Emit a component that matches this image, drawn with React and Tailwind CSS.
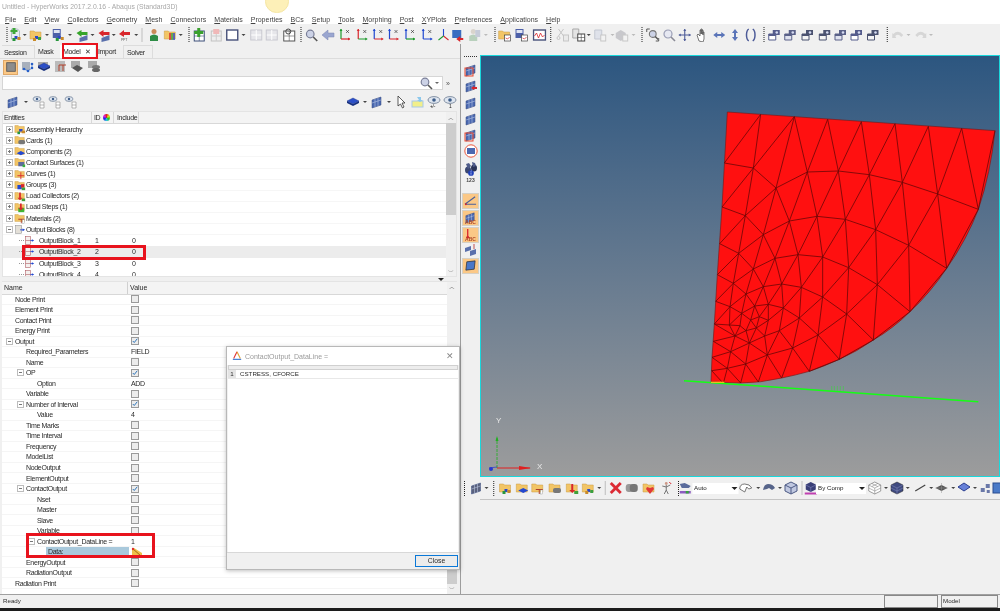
import React from "react";

const MENU = ["File","Edit","View","Collectors","Geometry","Mesh","Connectors","Materials","Properties","BCs","Setup","Tools","Morphing","Post","XYPlots","Preferences","Applications","Help"];

const Folder = ({ children }) => (
  <>
    <path d="M1 3h4l1 1h6v7H1z" fill="#f2c566" stroke="#c99a45" strokeWidth=".5" />
    {children}
  </>
);
const Mesh = ({ c = "#4a68b0" }) => (
  <>
    <path d="M2 5l9-3v8l-9 3z" fill={c} stroke="#34487f" strokeWidth=".5" />
    <path d="M5 4v8M8 3v8M2 8l9-3" stroke="#c8d4ee" strokeWidth=".5" />
  </>
);
const Axis = ({ a = "#1d9a2c", b = "#d8262c" }) => (
  <>
    <path d="M3 1v10" stroke={a} strokeWidth="1.2" />
    <path d="M3 11h9" stroke={b} strokeWidth="1.2" />
    <path d="M1.5 3L3 1l1.5 2z" fill={a} />
    <path d="M10 9.5l2 1.5-2 1.5z" fill={b} />
    <path d="M8 2l3 3M11 2L8 5" stroke="#222" strokeWidth=".6" />
  </>
);
const Cam = ({ c = "#555c8c", f = "#fff" }) => (
  <>
    <path d="M5 2h7v5H5z" fill={c} />
    <circle cx="9" cy="4.5" r="1.3" fill="#d6dcf2" />
    <path d="M1 6h7v6H1z" fill={f} stroke={c} strokeWidth="1" />
    <path d="M1 6h7v2H1z" fill={c} />
  </>
);
const Diamond = ({ c = "#2b4fc8" }) => (
  <>
    <path d="M7 3l6 3-6 3-6-3z" fill={c} stroke="#1a2f80" strokeWidth=".4" />
    <path d="M1 6v2l6 3 6-3V6l-6 3z" fill="#17307f" />
  </>
);

const ICONS = {
  fBlock: <Folder><rect x="6" y="8" width="3" height="3" fill="#2c49c8" /><rect x="9" y="9" width="3" height="3" fill="#c98a28" /><rect x="4" y="10" width="3" height="3" fill="#28963c" /></Folder>,
  docBlock: <><path d="M3 1h6l2 2v8H3z" fill="#e8eef2" stroke="#8a9aa8" strokeWidth=".6" /><path d="M4 0h3v2h2v2H7v2H4V4H2V2h2z" fill="#3fa83a" /><rect x="6" y="8" width="3" height="3" fill="#2c49c8" /><rect x="9" y="9" width="3" height="3" fill="#c98a28" /><rect x="4" y="10" width="3" height="3" fill="#28963c" /></>,
  fOpen: <Folder><rect x="6" y="8" width="3" height="3" fill="#2c49c8" /><rect x="9" y="9" width="3" height="3" fill="#38a040" /><rect x="4" y="10" width="3" height="3" fill="#c98a28" /></Folder>,
  save: <><path d="M2 1h8v9H2z" fill="#4c5fa8" /><path d="M3 2h6v3H3z" fill="#dfe4f2" /><rect x="7" y="8" width="3" height="3" fill="#2c49c8" /><rect x="10" y="9" width="3" height="3" fill="#c98a28" /><rect x="5" y="10" width="3" height="3" fill="#28963c" /></>,
  gArrow: <><path d="M4 10l8-3v5l-8 2z" fill="#5a70ac" /><path d="M1 5l5-3v2h6v3H6v2z" fill="#36a52a" /></>,
  rArrow: <><path d="M4 10l8-3v5l-8 2z" fill="#5a70ac" /><path d="M1 5l5-3v2h6v3H6v2z" fill="#d8262c" /></>,
  ppt: <><path d="M1 6l5-4v2h6v3H6v2z" fill="#d8262c" /><text x="3" y="13" fontSize="3.6" fill="#555">PPT</text></>,
  user: <><circle cx="7" cy="3.5" r="2.5" fill="#c98a58" /><path d="M3 13V8q4-3 8 0v5z" fill="#2e8c46" /></>,
  fColor: <Folder><rect x="6" y="5" width="1.5" height="7" fill="#d8262c" /><rect x="8" y="5" width="1.5" height="7" fill="#38a040" /><rect x="10" y="5" width="1.5" height="7" fill="#2c49c8" /></Folder>,
  plus: <><rect x="2" y="3" width="10" height="10" fill="#fff" stroke="#3d4f78" /><path d="M2 8h10M7 3v10" stroke="#3d4f78" strokeWidth=".6" /><path d="M5 0h3v3h3v3H8v3H5V6H2V3h3z" fill="#3aa02e" /></>,
  del: <><rect x="2" y="3" width="10" height="10" fill="#eee" stroke="#c2c2c2" /><path d="M7 3v10M2 8h10" stroke="#ccc" /><path d="M4 1h6v5H4z" fill="#f0b8b8" /></>,
  square: <rect x="1.5" y="2" width="11" height="10" fill="#fff" stroke="#47517a" strokeWidth="1.4" />,
  gridD: <><rect x="1.5" y="2" width="11" height="10" fill="#e6e6ea" stroke="#c8c8d0" /><path d="M7 2v10M2 7h10" stroke="#fff" /></>,
  gridK: <><rect x="1.5" y="3" width="11" height="10" fill="#fff" stroke="#555" /><path d="M7 3v10M2 8h10" stroke="#555" strokeWidth=".6" /><circle cx="6" cy="3.5" r="2.5" fill="none" stroke="#444" /></>,
  mag: <><circle cx="6" cy="6" r="3.8" fill="#ccd2e6" stroke="#7a7f98" strokeWidth="1.2" /><path d="M9 9l4 4" stroke="#555" strokeWidth="1.6" /></>,
  back: <path d="M1 7l6-5v3h6v4H7v3z" fill="#9aa6d0" stroke="#7984b0" strokeWidth=".5" />,
  ax1: <Axis />,
  ax2: <Axis a="#d8262c" b="#1d9a2c" />,
  ax3: <Axis a="#2048d0" b="#d8262c" />,
  ax4: <Axis a="#2048d0" b="#1d9a2c" />,
  ax5: <Axis a="#2048d0" b="#2048d0" />,
  ax6: <><path d="M7 1v7" stroke="#2048d0" strokeWidth="1.1" /><path d="M7 8l5 4" stroke="#d8262c" strokeWidth="1.1" /><path d="M7 8l-5 4" stroke="#1d9a2c" strokeWidth="1.1" /></>,
  blueR: <><path d="M2 2h9v8H2z" fill="#3a6cc0" /><path d="M6 11l4-3v2h3v2h-3v2z" fill="#d8262c" /></>,
  userD: <><circle cx="6" cy="3.5" r="2.5" fill="#d9d4cc" /><path d="M2 13V8q4-3 8 0v5z" fill="#b8d0bc" /><rect x="8" y="2" width="5" height="7" fill="#c6cbd8" /></>,
  fPic: <Folder><rect x="7" y="7" width="6" height="6" fill="#fff" stroke="#444" strokeWidth=".7" /><path d="M8 10l2 1 2-2" stroke="#d8262c" strokeWidth=".7" fill="none" /></Folder>,
  saveP: <><path d="M1 1h8v9H1z" fill="#4c5fa8" /><path d="M2 2h6v3H2z" fill="#dfe4f2" /><rect x="7" y="7" width="6" height="6" fill="#fff" stroke="#444" strokeWidth=".7" /><path d="M8 10l2 1 2-2" stroke="#d8262c" strokeWidth=".7" fill="none" /></>,
  wave: <><rect x="1" y="2" width="12" height="10" fill="#fff" stroke="#47517a" strokeWidth="1.4" /><path d="M2 8l2-3 2 5 2-5 2 4 2-2" stroke="#d8262c" strokeWidth=".8" fill="none" /></>,
  cutD: <><path d="M3 1l5 7M8 1L3 8" stroke="#c6c6c6" /><circle cx="3" cy="10" r="1.5" fill="none" stroke="#c6c6c6" /><rect x="8" y="7" width="5" height="6" fill="#eaeaea" stroke="#c6c6c6" /></>,
  copy: <><path d="M1 1h6v9H1z" fill="#e4e4e4" stroke="#a8a8a8" /><rect x="6" y="6" width="7" height="7" fill="#fff" stroke="#444" /><path d="M9.5 6v7M6 9.5h7" stroke="#444" strokeWidth=".6" /></>,
  pasteD: <><path d="M2 2h7v9H2z" fill="#dfe2ea" stroke="#c4c8d2" /><rect x="8" y="7" width="5" height="6" fill="#f2f2f2" stroke="#c6c6c6" /></>,
  blockD: <><path d="M1 5l5-3 5 3v5l-5 3-5-3z" fill="#c8c8cc" /><rect x="8" y="7" width="5" height="6" fill="#f2f2f2" stroke="#c6c6c6" /></>,
  zoomBox: <><path d="M1 4V1h3M10 13h3v-3" stroke="#333" strokeWidth=".8" fill="none" /><circle cx="7" cy="6" r="3.4" fill="#ccd2e6" stroke="#777" strokeWidth="1.1" /><path d="M9.5 8.5l3 3" stroke="#555" strokeWidth="1.5" /></>,
  zoomP: <><circle cx="6" cy="6" r="4" fill="#e6e8f2" stroke="#9a9eb5" strokeWidth="1.2" /><path d="M9 9l4 4" stroke="#8a8a96" strokeWidth="1.6" /></>,
  move: <><path d="M7 1v12M1 7h12" stroke="#4d5b98" strokeWidth="1.1" /><path d="M5.5 3L7 1l1.5 2zM5.5 11L7 13l1.5-2zM3 5.5L1 7l2 1.5zM11 5.5L13 7l-2 1.5z" fill="#4d5b98" /></>,
  hand: <path d="M4 13L2 7l1-1 2 2V2h1v4-5h1v5-4h1v5-3h1v7l-1 3z" fill="#fff" stroke="#444" strokeWidth=".7" />,
  lr: <path d="M1 7l4-3v2h4V4l4 3-4 3V8H5v2z" fill="#5a74b8" />,
  ud: <path d="M7 1l3 4H8v4h2l-3 4-3-4h2V5H4z" fill="#5a74b8" />,
  braces: <path d="M5 1C2 3 2 11 5 13M9 1c3 2 3 10 0 12" fill="none" stroke="#4d5b98" strokeWidth="1.5" />,
  cam1: <Cam />,
  cam2: <Cam c="#5a6188" f="#dfe2ee" />,
  cam3: <Cam c="#4b5270" f="#f4f4f4" />,
  undo: <path d="M2 6q5-5 10 1l-2 2q-3-4-6-1l1 2H1V5z" fill="#d6d6d6" />,
  redo: <path d="M12 6Q7 1 2 7l2 2q3-4 6-1L9 10h4V5z" fill="#d6d6d6" />,
  mesh: <Mesh />,
  meshD: <Mesh c="#5b627e" />,
  fComp: <Folder><path d="M8 7l5 2.5-5 2.5-5-2.5z" fill="#2448d0" /></Folder>,
  fMat: <Folder><path d="M5 8h7v1H9v4H8V9H5z" fill="#b0402c" /><rect x="10" y="9" width="2" height="4" fill="#fff" stroke="#888" strokeWidth=".4" /></Folder>,
  fCard: <Folder><rect x="5" y="7" width="8" height="5" rx="2" fill="#777" /></Folder>,
  fLoad: <Folder><path d="M6 3h2v6h2l-3 3-3-3h2z" fill="#d8262c" /><rect x="9" y="10" width="4" height="3" fill="#3fa03a" /></Folder>,
  fStep: <Folder><rect x="5" y="8" width="7" height="5" fill="#3fb530" /><path d="M7 3h2v5h2l-3 3-3-3h2z" fill="#d8262c" /></Folder>,
  fSurf: <Folder><rect x="5" y="7" width="7" height="5" fill="#5f6b9c" /><rect x="10" y="10" width="3" height="3" fill="#38b040" /></Folder>,
  fCurve: <Folder><path d="M8 5v8M4 9h8" stroke="#d8262c" /></Folder>,
  fGroup: <Folder><rect x="4" y="7" width="5" height="5" fill="#2448d0" /><rect x="8" y="6" width="4" height="4" fill="#d8262c" /><rect x="9" y="10" width="4" height="3" fill="#38a040" /></Folder>,
  fOut: <><rect x="2" y="3" width="7" height="9" fill="#e4e0d8" stroke="#888" strokeWidth=".6" /><path d="M7 8h4" stroke="#2448d0" /><path d="M10 6.5L13 8l-3 1.5z" fill="#2448d0" /></>,
  fAsm: <Folder><rect x="6" y="7" width="4" height="3" fill="#2c49c8" /><rect x="9" y="9" width="4" height="3" fill="#c98a28" /><rect x="4" y="10" width="3" height="3" fill="#28963c" /></Folder>,
  out: <><rect x="2" y="2" width="6" height="10" fill="#f4f0ee" stroke="#a85058" strokeWidth=".7" /><path d="M2 7h6" stroke="#a85058" strokeWidth=".7" /><path d="M8 7h3" stroke="#2448d0" /><path d="M10 5.5L13 7l-3 1.5z" fill="#2448d0" /></>,
  panel: <rect x="2" y="2" width="10" height="10" fill="#8d8d8d" stroke="#555" />,
  tree: <><rect x="1" y="2" width="8" height="8" fill="#a8b0bc" /><circle cx="11" cy="4" r="1.3" fill="#2860c8" /><circle cx="11" cy="8" r="1.3" fill="#2860c8" /><circle cx="7" cy="11" r="1.3" fill="#2860c8" /><circle cx="3" cy="9" r="1.3" fill="#2860c8" /><path d="M3 9l4 2 4-3-0-4" stroke="#2860c8" strokeWidth=".6" fill="none" /></>,
  comp: <><path d="M1 2h10v5H1z" fill="#a8a8a8" /><Diamond /></>,
  mat: <><rect x="1" y="1" width="10" height="11" fill="#bbb" /><path d="M5 11V5h7M9 5v6" stroke="#b0402c" fill="none" /></>,
  card: <><rect x="1" y="1" width="9" height="7" fill="#aaa" /><path d="M2 8l5-3 6 3-5 4z" fill="#555" /></>,
  stack: <><rect x="1" y="1" width="9" height="7" fill="#aaa" /><ellipse cx="9" cy="7" rx="4" ry="2" fill="#777" /><ellipse cx="9" cy="10" rx="4" ry="2" fill="#666" /></>,
  eyeTree: <><ellipse cx="5" cy="4" rx="4" ry="2.4" fill="#dfe6f0" stroke="#6a7a90" strokeWidth=".7" /><circle cx="5" cy="4" r="1.2" fill="#3c5c88" /><path d="M8 7h4v6H8zM8 10h4" stroke="#8a8a8a" strokeWidth=".6" fill="#fff" /></>,
  eye: <><ellipse cx="7" cy="5" rx="6" ry="3.4" fill="#dfe6f0" stroke="#6a7a90" strokeWidth=".8" /><circle cx="7" cy="5" r="1.8" fill="#3c5c88" /><text x="3" y="13" fontSize="5" fill="#222">+/-</text></>,
  eye1: <><ellipse cx="7" cy="5" rx="6" ry="3.4" fill="#dfe6f0" stroke="#6a7a90" strokeWidth=".8" /><circle cx="7" cy="5" r="1.8" fill="#3c5c88" /><text x="6" y="13" fontSize="5" fill="#222">1</text></>,
  diamond: <Diamond />,
  cursor: <path d="M3 1l7 7H7l2 4-1.5 1-2-4L3 11z" fill="#fff" stroke="#333" strokeWidth=".8" />,
  yellow: <><rect x="1" y="6" width="11" height="6" fill="#f2ef8a" stroke="#a8c8e8" /><path d="M6 2h4v3h2l-3 2-3-2h2z" fill="#8cc8ec" /></>,
  xRed: <path d="M1 3l2-2 4 4 4-4 2 2-4 4 4 4-2 2-4-4-4 4-2-2 4-4z" fill="#dc2a34" />,
  parts: <><rect x="1" y="3" width="7" height="8" rx="3" fill="#999" /><rect x="5" y="3" width="8" height="8" rx="3" fill="#777" /></>,
  fHeart: <Folder><path d="M8 7l3-1 1 2-4 5-4-5 1-2z" fill="#e03838" /></Folder>,
  person: <><circle cx="7" cy="2.5" r="1.4" fill="#c98" /><path d="M7 4v5M5 13l2-4 2 4M3 5l4 1 4-2" stroke="#777" fill="none" /><path d="M10 1l2 2" stroke="#d8262c" /></>,
  comboA: <><path d="M1 3l5-1 6 3-2 2H3z" fill="#5a6c9c" /><rect x="1" y="10" width="11" height="2.5" fill="#8c5cc0" /><rect x="7" y="10" width="3" height="2.5" fill="#38a040" /></>,
  cut: <path d="M1 8q0-5 5-5 5 0 7 4l-3 1-2-2-2 5z" fill="#fff" stroke="#555" strokeWidth=".8" />,
  solid: <path d="M1 9q1-6 5-6 5 0 7 4l-3 2-3-2-2 1z" fill="#56648a" />,
  cube: <><path d="M7 1l6 3v6l-6 3-6-3V4z" fill="#c0c8e0" stroke="#4c5a84" /><path d="M1 4l6 3 6-3M7 7v6" stroke="#4c5a84" fill="none" /></>,
  cubeC: <><path d="M7 1l5 2.5v5l-5 2.5-5-2.5v-5z" fill="#3a3f78" /><path d="M2 4l5 2.5 5-2.5M7 6.5V11" stroke="#8d92c8" fill="none" strokeWidth=".5" /><rect x="1" y="11.5" width="12" height="2" fill="#c040b0" /></>,
  wire: <><path d="M7 1l6 3v6l-6 3-6-3V4z" fill="#fff" stroke="#777" strokeWidth=".7" /><path d="M1 4l6 3 6-3M7 7v6M4 2.5l6 3M10 2.5l-6 3M1 7l6 3 6-3" stroke="#777" fill="none" strokeWidth=".5" /></>,
  cubeD: <><path d="M7 1l6 3v6l-6 3-6-3V4z" fill="#3f4a80" stroke="#222" strokeWidth=".5" /><path d="M1 4l6 3 6-3M7 7v6M1 7l6 3 6-3" stroke="#8890c0" fill="none" strokeWidth=".5" /></>,
  line: <path d="M2 10l10-6" stroke="#444" strokeWidth="1.2" />,
  plane: <><path d="M7 4l6 3-6 3-6-3z" fill="#555" /><path d="M7 2v10M1 7h12" stroke="#999" strokeWidth=".5" /></>,
  plane2: <path d="M7 2l6 4-6 4-6-4z" fill="#6680d8" stroke="#2a3d90" />,
  pieces: <><rect x="2" y="7" width="4" height="4" fill="#6a78a8" /><rect x="7" y="3" width="4" height="4" fill="#6a78a8" /><rect x="8" y="9" width="3" height="3" fill="#6a78a8" /></>,
  blue: <rect x="2" y="2" width="10" height="10" fill="#4a7ac8" stroke="#2a4d90" />,
  vFrame: <><Mesh /><rect x="1" y="5" width="8" height="8" fill="none" stroke="#e8452c" /></>,
  vArrow: <><Mesh /><path d="M7 9l3-2v1h3v2h-3v1z" fill="#d8262c" /></>,
  vCircle: <><circle cx="7" cy="7" r="6.2" fill="#fff" stroke="#e8563c" /><path d="M3 4h8v6H3z" fill="#4a68b0" /></>,
  bino: <><ellipse cx="4" cy="9" rx="3" ry="3.5" fill="#3a4670" /><ellipse cx="10" cy="7" rx="3" ry="3.5" fill="#2a3356" /><path d="M2 3l3-1 2 3-3 3zM8 1l3 1 1 3-3 1z" fill="#4f5c8a" /></>,
  info: <><circle cx="7" cy="7" r="5" fill="#2040b8" /><path d="M7 3.5v1.500M7 6v4" stroke="#fff" /></>,
  vAngle: <><path d="M1 11L12 3M1 11h12" stroke="#4a5f9a" strokeWidth="1.2" fill="none" /><circle cx="2" cy="11" r="1" fill="#d8262c" /></>,
  vAbc: <Mesh />,
  vRed: <><path d="M4 1v9" stroke="#d8262c" strokeWidth="1.4" /><circle cx="4" cy="10" r="1.5" fill="#d8262c" /></>,
  vTwo: <><path d="M1 5l6-2v4l-6 2zM6 8l6-2v5l-6 2z" fill="#5a70ac" /><path d="M10 1v5" stroke="#c05050" /></>,
  vBlue: <path d="M3 3l9-1-1 9-9 1z" fill="#4a78c8" stroke="#222" strokeWidth=".7" />,
};

function Icon({ k, className = "" }) {
  return (
    <svg viewBox="0 0 14 14" className={`w-[14px] h-[14px] shrink-0 ${className}`}>
      {ICONS[k]}
    </svg>
  );
}

const Drop = () => <span className="block w-0 h-0 border-l-[2px] border-r-[2px] border-t-[2px] border-l-transparent border-r-transparent border-t-[#444] shrink-0" />;
const DropD = () => <span className="block w-0 h-0 border-l-[2px] border-r-[2px] border-t-[2px] border-l-transparent border-r-transparent border-t-[#bbb] shrink-0" />;
const Dots = () => <span className="block h-[15px] border-l border-dotted border-[#222] shrink-0" />;
const Sep = () => <span className="block h-[14px] border-l border-[#bdbdbd] shrink-0" />;

function Slot({ k }) {
  if (k === "dots") return <Dots />;
  if (k === "sep") return <Sep />;
  if (k === "drop") return <Drop />;
  if (k === "dropD") return <DropD />;
  if (k === "auto") return <Combo label="Auto" w="w-[46px]" />;
  if (k === "comp") return <Combo label="By Comp" w="w-[50px]" />;
  return <Icon k={k} />;
}
function Combo({ label, w }) {
  return (
    <div className={`${w} h-[11px] bg-white flex items-center justify-between pl-[2px] pr-[1px] text-[6.2px] tracking-normal text-[#222]`}>
      <span>{label}</span>
      <span className="w-0 h-0 border-l-[3px] border-r-[3px] border-t-[3px] border-l-transparent border-r-transparent border-t-[#222]" />
    </div>
  );
}

const TOP = [
  [7, "dots"],[15, "docBlock"],[25, "drop"],[36, "fOpen"],[47, "drop"],[58, "save"],[70, "drop"],[82, "gArrow"],[92, "drop"],[104, "rArrow"],[114, "drop"],[125, "ppt"],[136, "drop"],[142, "sep"],[154, "user"],[170, "fColor"],[181, "drop"],[189, "dots"],[199, "plus"],[216, "del"],[232, "square"],[243, "drop"],[256, "gridD"],[272, "gridD"],[289, "gridK"],[301, "dots"],[311, "mag"],[328, "back"],[345, "ax1"],[362, "ax2"],[378, "ax3"],[393, "ax3"],[410, "ax4"],[427, "ax5"],[443, "ax6"],[457, "blueR"],[474, "userD"],[486, "dropD"],[494.5, "dots"],[505, "fPic"],[521, "saveP"],[539, "wave"],[551, "dots"],[562, "cutD"],[579, "copy"],[589, "drop"],[600, "pasteD"],[612, "dropD"],[622, "blockD"],[633, "dropD"],[642, "dots"],[653, "zoomBox"],[669, "zoomP"],[685, "move"],[702, "hand"],[719, "lr"],[735, "ud"],[751, "braces"],[764, "dots"],[775, "cam1"],[791, "cam2"],[808, "cam3"],[825, "cam3"],[841, "cam2"],[857, "cam1"],[873, "cam3"],[887, "dots"],[898, "undo"],[908, "dropD"],[920, "redo"],[931, "dropD"],
];

// each slot is centred on its x; widths come from the list of centres
function CBar({ items, start = 0, className = "" }) {
  const bounds = items.map((it, i) => (i === 0 ? Math.max(start, it[0] - 7) : (items[i - 1][0] + it[0]) / 2));
  return (
    <div className={`flex items-center ${className}`} style={{ paddingLeft: bounds[0] - start }}>
      {items.map(([x, k], i) => {
        const left = bounds[i];
        const right = i + 1 < items.length ? bounds[i + 1] : x + (x - left);
        const mid = (left + right) / 2;
        return (
          <div key={i} className="h-full flex items-center justify-center shrink-0" style={{ width: right - left }}>
            <div className="flex items-center justify-center" style={{ transform: `translateX(${x - mid}px)` }}>
              <Slot k={k} />
            </div>
          </div>
        );
      })}
    </div>
  );
}

const BOTTOM = [
  [464, "dots"],[476, "meshD"],[486, "drop"],[494, "dots"],[505, "fBlock"],[522, "fComp"],[538, "fMat"],[555, "fCard"],[572, "fLoad"],[588, "fOpen"],[599, "drop"],[605, "sep"],[616, "xRed"],[632, "parts"],[649, "fHeart"],[666, "person"],[678, "dots"],[686, "comboA"],[715, "auto"],[746, "cut"],[758, "drop"],[769, "solid"],[780, "drop"],[791, "cube"],[802, "sep"],[811, "cubeC"],[841, "comp"],[875, "wire"],[886, "drop"],[897, "cubeD"],[908, "drop"],[920, "line"],[931, "drop"],[941, "plane"],[953, "drop"],[964, "plane2"],[975, "drop"],[986, "pieces"],[998, "blue"],
];

const TREE = [
  ["fAsm", "Assembly Hierarchy"],["fCard", "Cards (1)"],["fComp", "Components (2)"],["fSurf", "Contact Surfaces (1)"],["fCurve", "Curves (1)"],["fGroup", "Groups (3)"],["fLoad", "Load Collectors (2)"],["fStep", "Load Steps (1)"],["fMat", "Materials (2)"],
];
const BLOCKS = [["OutputBlock_1", "1"],["OutputBlock_2", "2"],["OutputBlock_3", "3"],["OutputBlock_4", "4"]];

const PROPS = [
  ["Node Print",0,"c"],["Element Print",0,"c"],["Contact Print",0,"c"],["Energy Print",0,"c"],["Output",0,"x",1],
  ["Required_Parameters",1,"FIELD"],["Name",1,"c"],["OP",1,"x",1],["Option",2,"ADD"],["Variable",1,"c"],
  ["Number of Interval",1,"x",1],["Value",2,"4"],["Time Marks",1,"c"],["Time Interval",1,"c"],["Frequency",1,"c"],
  ["ModelList",1,"c"],["NodeOutput",1,"c"],["ElementOutput",1,"c"],["ContactOutput",1,"x",1],["Nset",2,"c"],
  ["Master",2,"c"],["Slave",2,"c"],["Variable",2,"c"],["ContactOutput_DataLine =",2,"1",1],["Data:",3,"data"],
  ["EnergyOutput",1,"c"],["RadiationOutput",1,"c"],["Radiation Print",0,"c"],
];
const PAD = ["pl-[13px]", "pl-[24px]", "pl-[35px]", "pl-[46px]"];
const EXP = ["pl-[4px]", "pl-[15px]", "pl-[26px]", "pl-[37px]"];

const Exp = ({ minus }) => (
  <span className="w-[7px] h-[7px] border border-[#bcbcbc] bg-white flex items-center justify-center relative shrink-0">
    <span className="w-[3px] h-px bg-[#777]" />
    {!minus && <span className="absolute w-px h-[3px] bg-[#777]" />}
  </span>
);
const Check = ({ on }) => (
  <span className="w-[8px] h-[8px] border border-[#9a9a9a] bg-[#ececec] flex items-center justify-center shrink-0">
    {on && (
      <svg viewBox="0 0 8 8" className="w-[8px] h-[8px]"><path d="M1 4l2 2 4-5" stroke="#2a72b8" strokeWidth="1.3" fill="none" /></svg>
    )}
  </span>
);

const MESH_E = "133,189 220,204|242,43 133,189|242,43 220,204|220,204 343,50|343,50 288,264|343,50 382,216|443,58 382,216|443,58 475,213|544,65 475,213|544,65 568,224|645,71 568,224|645,71 667,247|745,79 667,247|745,79 773,282|845,85 773,282|845,85 895,328|945,92 895,328|220,204 288,264|288,264 382,216|382,216 475,213|475,213 568,224|568,224 667,247|667,247 773,282|773,282 895,328|220,204 126,321|220,204 196,347|126,321 196,347|288,264 196,347|288,264 250,404|288,264 328,363|382,216 328,363|382,216 411,349|475,213 411,349|475,213 496,358|568,224 496,358|568,224 587,389|667,247 587,389|667,247 686,436|773,282 686,436|773,282 800,505|895,328 800,505|196,347 250,404|250,404 328,363|328,363 411,349|411,349 496,358|496,358 587,389|587,389 686,436|686,436 800,505|196,347 119,431|196,347 176,460|119,431 176,460|250,404 176,460|250,404 220,507|250,404 285,475|328,363 285,475|328,363 354,464|411,349 354,464|411,349 428,471|496,358 428,471|496,358 506,503|587,389 506,503|587,389 592,554|686,436 592,554|686,436 690,635|800,505 690,635|176,460 220,507|220,507 285,475|285,475 354,464|354,464 428,471|428,471 506,503|506,503 592,554|592,554 690,635|176,460 112,524|176,460 160,550|112,524 160,550|220,507 160,550|220,507 198,582|220,507 250,560|285,475 250,560|285,475 305,552|354,464 305,552|354,464 364,562|428,471 364,562|428,471 428,591|506,503 428,591|506,503 500,642|592,554 500,642|592,554 580,720|690,635 580,720|160,550 198,582|198,582 250,560|250,560 305,552|305,552 364,562|364,562 428,591|428,591 500,642|500,642 580,720|160,550 107,604|160,550 150,620|107,604 150,620|198,582 150,620|198,582 185,640|198,582 224,618|250,560 224,618|250,560 265,613|305,552 265,613|305,552 310,624|364,562 310,624|364,562 358,654|428,591 358,654|428,591 414,705|500,642 414,705|500,642 478,778|580,720 478,778|150,620 185,640|185,640 224,618|224,618 265,613|265,613 310,624|310,624 358,654|358,654 414,705|414,705 478,778|150,620 103,672|150,620 148,675|103,672 148,675|185,640 148,675|185,640 180,677|185,640 212,660|224,618 212,660|224,618 238,650|265,613 238,650|265,613 265,661|310,624 265,661|310,624 298,692|358,654 298,692|358,654 338,744|414,705 338,744|414,705 388,814|478,778 388,814|103,672 165,708|100,724 165,708|148,675 165,708|180,677 165,708|180,677 198,692|165,708 198,692|212,660 198,692|212,660 229,684|198,692 229,684|238,650 229,684|265,661 229,684|229,684 254,708|198,692 208,729|229,684 208,729|254,708 208,729|165,708 208,729|265,661 254,708|298,692 254,708|298,692 262,765|254,708 262,765|298,692 338,744|338,744 262,765|208,729 262,765|208,729 152,755|165,708 152,755|100,724 152,755|96,772 152,755|152,755 197,792|208,729 197,792|262,765 197,792|152,755 142,805|96,772 142,805|95,812 142,805|197,792 142,805|142,805 130,850|142,805 182,849|197,792 182,849|197,792 235,846|262,765 235,846|262,765 305,834|338,744 305,834|338,744 388,814|95,812 130,850|148,675 180,677|238,650 265,661|212,660 238,650".split("|").map((s) => s.split(" "));

function Viewport() {
  return (
    <div className="h-[422px] border border-[#19d8dc] bg-gradient-to-b from-[#2c5680] to-[#9c9c9c] relative overflow-hidden">
      <svg viewBox="0 0 960 930" className="absolute left-[199px] top-[44px] w-[320px] h-[310px]">
        <path d="M142 36L945 92Q932 220 895 328Q860 420 800 505Q750 580 690 635Q640 685 580 720Q530 755 478 778Q430 800 388 814Q345 826 305 834Q240 849 180 849L93 846L96 772L103 672L112 524L126 321Z" fill="#ff1010" stroke="#7a1a1a" strokeWidth="2" />
        {MESH_E.map(([a, b], i) => {
          const [x1, y1] = a.split(",");
          const [x2, y2] = b.split(",");
          return <line key={i} x1={x1} y1={y1} x2={x2} y2={y2} stroke="#6a0606" strokeWidth="2.4" />;
        })}
        <line x1="12" y1="842" x2="895" y2="905" stroke="#14ff14" strokeWidth="4.5" />
        <path d="M93 847h40" stroke="#e8c020" strokeWidth="4" />
        <path d="M455 858v14M463 858v14M472 858v14M481 858v14M490 858v14" stroke="#30e030" strokeWidth="1.5" />
      </svg>
      <svg viewBox="0 0 70 60" className="absolute left-[2px] top-[362px] w-[70px] h-[60px]">
        <path d="M14 50V20" stroke="#20b020" strokeWidth=".8" strokeDasharray="3 1" />
        <path d="M12.5 23l1.5-5 1.5 5z" fill="#20b020" />
        <path d="M14 50h33" stroke="#e02020" strokeWidth="1" />
        <path d="M36 48l12 2-12 2z" fill="#e02020" />
        <circle cx="8" cy="51" r="2" fill="#2838d0" />
        <path d="M6 50l8-1" stroke="#2838d0" strokeWidth=".7" />
      </svg>
      <span className="absolute left-[15px] top-[361px] text-[8px] text-[#e8e8e8] tracking-normal">Y</span>
      <span className="absolute left-[56px] top-[407px] text-[8px] text-[#e8e8e8] tracking-normal">X</span>
    </div>
  );
}

function VTool() {
  const Orange = ({ k, abc }) => (
    <div className="w-[17px] h-[16px] bg-[#fbc886] border border-[#d6d0c4] flex flex-col items-center justify-center relative">
      <Icon k={k} className="!w-[13px] !h-[13px]" />
      {abc && <span className="absolute bottom-0 text-[5px] font-bold text-[#b04828] leading-none tracking-normal">ABC</span>}
    </div>
  );
  return (
    <div className="w-[19px] shrink-0 flex flex-col items-center pt-[12px]">
      <div className="w-[13px] border-t border-dotted border-[#333] mb-[6px]" />
      <div className="flex flex-col items-center gap-[2.3px]">
        {["vFrame", "vArrow", "mesh", "mesh", "vFrame", "vCircle", "bino"].map((k, i) => <Icon key={i} k={k} />)}
      </div>
      <div className="flex flex-col items-center mt-[-6px] mb-[10px]">
        <Icon k="info" className="!w-[8px] !h-[8px]" />
        <span className="text-[5px] font-bold text-[#444] leading-[6px] tracking-normal">123</span>
      </div>
      <div className="flex flex-col items-center gap-[1px]">
        <Orange k="vAngle" />
        <Orange k="vAbc" abc />
        <Orange k="vRed" abc />
      </div>
      <Icon k="vTwo" className="mb-[1px]" />
      <Orange k="vBlue" />
    </div>
  );
}

function TreeRow({ children }) {
  return <div className="h-[11.14px] flex items-center border-b border-[#f6f6f6]">{children}</div>;
}

export default function App() {
  return (
    <div className="w-[1000px] h-[611px] relative overflow-hidden flex flex-col bg-[#f0f0f0] text-[7px] tracking-[-0.33px] leading-none text-[#2a2a2a] blur-[0.35px] font-['Liberation_Sans',sans-serif]">
      <div className="absolute left-[265px] top-[-10px] w-[24px] h-[23px] rounded-full bg-[#fdf0b8] border border-[#f5e6a4]" />
      <div className="h-[14px] bg-white shrink-0 flex items-center pl-[2px] text-[6.8px] tracking-normal text-[#a8a8a8]">
        <span className="relative">Untitled - HyperWorks 2017.2.0.16 - Abaqus (Standard3D)</span>
      </div>
      <div className="h-[10px] bg-white shrink-0 flex items-center pl-[1px] text-[#444] tracking-normal">
        {MENU.map((m) => (
          <span key={m} className="px-[4px] whitespace-nowrap text-[7px]"><span className="underline">{m[0]}</span>{m.slice(1)}</span>
        ))}
      </div>
      <CBar items={TOP} className="h-[19px] mt-[1px] shrink-0" />

      <div className="flex flex-1 min-h-0">
        {/* left column */}
        <div className="w-[461px] shrink-0 flex flex-col border-r border-[#9d9d9d]">
          <div className="h-[15px] shrink-0 flex items-end pl-[2px] border-b border-[#dcdcdc]">
            <span className="w-[33px] h-[13px] pl-[2px] flex items-center border-t border-r border-[#dcdcdc]">Session</span>
            <span className="w-[25px] h-[13px] pl-[3px] flex items-center">Mask</span>
            <span className="w-[35px] h-[13px] pl-[3px] flex items-center bg-white justify-between pr-[4px]">Model<span>✕</span></span>
            <span className="w-[29px] h-[13px] pl-[3px] flex items-center border-r border-[#dcdcdc]">Import</span>
            <span className="w-[29px] h-[13px] pl-[3px] flex items-center border-r border-t border-[#dcdcdc]">Solver</span>
          </div>
          <div className="h-[16px] shrink-0 flex items-center pl-[3px] gap-[2.5px]">
            <div className="w-[15px] h-[15px] bg-[#fbc886] border border-[#e0a868] flex items-center justify-center"><Icon k="panel" className="!w-[12px] !h-[12px]" /></div>
            {["tree", "comp", "mat", "card", "stack"].map((k) => <Icon key={k} k={k} />)}
          </div>
          <div className="h-[14px] mt-[1px] shrink-0 ml-[2px] flex items-center">
            <div className="w-[441px] h-[14px] bg-white border border-[#d6d6d6] flex items-center justify-end pr-[3px] gap-[2px]">
              <Icon k="mag" />
              <span className="w-0 h-0 border-l-[2px] border-r-[2px] border-t-[2px] border-l-transparent border-r-transparent border-t-[#666]" />
            </div>
            <span className="ml-[3px] text-[#555] text-[7px]">»</span>
          </div>
          <div className="h-[21px] shrink-0 flex items-center pt-[2px] pl-[6px] pr-[3px]">
            <Icon k="mesh" /><span className="mx-[4px]"><Drop /></span>
            <Icon k="eyeTree" /><Icon k="eyeTree" className="ml-[2px]" /><Icon k="eyeTree" className="ml-[2px]" />
            <div className="flex-1" />
            <Icon k="diamond" /><span className="mx-[3px]"><Drop /></span><Icon k="mesh" /><span className="mx-[3px]"><Drop /></span>
            <Icon k="cursor" className="ml-[1px]" /><Icon k="yellow" className="ml-[2px]" /><Icon k="eye" className="ml-[2px]" /><Icon k="eye1" className="ml-[2px]" />
          </div>

          {/* entity tree */}
          <div className="ml-[2px] mr-[3px] h-[166px] shrink-0 flex bg-white border border-[#e4e4e4] overflow-hidden">
            <div className="flex-1 min-w-0 flex flex-col">
              <div className="h-[12px] shrink-0 flex items-center bg-[#f4f4f4] border-b border-[#d8d8d8]">
                <span className="w-[89px] pl-[1px] border-r border-[#d8d8d8] h-full flex items-center">Entities</span>
                <span className="w-[10px] pl-[2px] h-full flex items-center">ID</span>
                <span className="w-[7px] h-[7px] rounded-full mx-[1px] bg-[conic-gradient(#e02020,#e0e020,#20c020,#20c0e0,#2020e0,#e020e0,#e02020)] shrink-0" />
                <span className="pl-[3px] pr-[1px] h-full flex items-center border-l border-r border-[#d8d8d8] ml-[2px]">Include</span>
              </div>
              <div className="flex flex-col">
                {TREE.map(([k, t]) => (
                  <TreeRow key={t}>
                    <span className="ml-[3px]"><Exp /></span>
                    <Icon k={k} className="ml-[1px] !w-[12px] !h-[12px]" />
                    <span className="whitespace-nowrap">{t}</span>
                  </TreeRow>
                ))}
                <TreeRow>
                  <span className="ml-[3px]"><Exp minus /></span>
                  <Icon k="fOut" className="ml-[1px] !w-[12px] !h-[12px]" />
                  <span className="whitespace-nowrap">Output Blocks (8)</span>
                </TreeRow>
                {BLOCKS.map(([n, id], i) => (
                  <div key={n} className={`h-[11.14px] flex items-center ${i === 1 ? "bg-[#ececec]" : ""}`}>
                    <span className="w-[5px] ml-[16px] border-t border-dotted border-[#999]" />
                    <Icon k="out" className="!w-[11px] !h-[11px]" />
                    <span className="w-[56px] ml-[4px] whitespace-nowrap">{n}</span>
                    <span className="w-[37px]">{id}</span>
                    <span>0</span>
                  </div>
                ))}
              </div>
            </div>
            <div className="w-[10px] shrink-0 bg-[#f0f0f0] flex flex-col items-center text-[#555]">
              <span className="h-[11px] text-[6px] flex items-center">︿</span>
              <div className="w-full h-[92px] bg-[#cdcdcd]" />
              <div className="flex-1" />
              <span className="h-[9px] text-[6px] flex items-center">﹀</span>
            </div>
          </div>

          <div className="h-[4px] shrink-0 flex justify-end items-center pr-[16px]">
            <span className="w-0 h-0 border-l-[3px] border-r-[3px] border-t-[3px] border-l-transparent border-r-transparent border-t-[#222]" />
          </div>

          {/* properties */}
          <div className="ml-[2px] mr-[3px] flex-1 min-h-0 flex bg-white border-t border-[#e4e4e4] overflow-hidden">
            <div className="flex-1 min-w-0 flex flex-col">
              <div className="h-[12.5px] shrink-0 flex items-center bg-[#f4f4f4] border-b border-[#d8d8d8] text-[7px] tracking-normal">
                <span className="w-[126px] pl-[2px] h-full flex items-center border-r border-[#d0d0d0]">Name</span>
                <span className="pl-[2px]">Value</span>
              </div>
              {PROPS.map(([label, lvl, val, exp], i) => (
                <div key={i} className="h-[10.53px] shrink-0 flex items-center border-b border-[#f5f5f5]">
                  <div className={`w-[127px] shrink-0 flex items-center h-full ${exp ? EXP[lvl] : PAD[lvl]}`}>
                    {exp && <span className="mr-[2px]"><Exp minus /></span>}
                    <span className={`whitespace-nowrap ${val === "data" ? "flex-1 self-stretch flex items-center pl-[2px] ml-[-2px] bg-[#a9c9dc]" : ""}`}>{label}</span>
                  </div>
                  <div className="pl-[2px] flex items-center">
                    {val === "c" && <Check />}
                    {val === "x" && <Check on />}
                    {val === "data" && (
                      <svg viewBox="0 0 12 10" className="w-[12px] h-[10px]"><path d="M1 9h10V6L3 1H1z" fill="#efc04a" /><path d="M1 1l9 8" stroke="#a06a10" /><circle cx="2" cy="2" r="1.2" fill="#e03030" /></svg>
                    )}
                    {val !== "c" && val !== "x" && val !== "data" && <span>{val}</span>}
                  </div>
                </div>
              ))}
            </div>
            <div className="w-[10px] shrink-0 bg-[#f0f0f0] flex flex-col items-center text-[#555]">
              <span className="h-[10px] text-[6px] flex items-center">︿</span>
              <div className="w-full flex-1 bg-[#cdcdcd] mt-[56px]" />
              <span className="h-[10px] text-[6px] flex items-center">﹀</span>
            </div>
          </div>
        </div>

        <VTool />

        {/* right column */}
        <div className="flex-1 min-w-0 flex flex-col pt-[11px]">
          <Viewport />
          <CBar items={BOTTOM} start={462} className="h-[22px] ml-[-18px] w-[538px] shrink-0" />
          <div className="flex-1 border-t border-[#c4c4c4]" />
        </div>
      </div>

      {/* status bar */}
      <div className="h-[14px] shrink-0 flex items-center border-t border-[#a0a0a0] pl-[3px] text-[6.2px] tracking-normal">
        <span className="flex-1">Ready</span>
        <span className="w-[54px] h-[13px] border border-[#888] mr-[3px]" />
        <span className="w-[57px] h-[13px] border border-[#888] flex items-center pl-px">Model</span>
        <span className="w-[2px]" />
      </div>
      <div className="h-[3px] shrink-0 bg-[#1c1c1c]" />

      {/* floating dialog */}
      <div className="absolute left-[226px] top-[346px] w-[234px] h-[224px] bg-[#f0f0f0] border border-[#b8b8b8] shadow-[0_1px_4px_rgba(0,0,0,0.25)] flex flex-col">
        <div className="h-[18px] shrink-0 bg-white flex items-center pl-[5px] pr-[5px] text-[7px] tracking-normal text-[#9a9a9a]">
          <svg viewBox="0 0 12 12" className="w-[10px] h-[10px] mr-[3px]"><path d="M6 1L2 9" stroke="#e03030" strokeWidth="1.3" /><path d="M6 1l4 8" stroke="#e0a030" strokeWidth="1.3" /><path d="M1 10h10" stroke="#3070d0" strokeWidth="1.3" /></svg>
          <span className="flex-1">ContactOutput_DataLine =</span>
          <span className="text-[#888] text-[9px]">✕</span>
        </div>
        <div className="flex-1 bg-white mx-[1px] flex flex-col">
          <div className="h-[5px] bg-[#ededed] border border-[#d0d0d0]" />
          <div className="h-[9px] flex items-center border-b border-[#e8e8e8] text-[6.2px] tracking-normal">
            <span className="w-[8px] h-full bg-[#e4e4e4] flex items-center justify-center">1</span>
            <span className="pl-[4px]">CSTRESS, CFORCE</span>
          </div>
        </div>
        <div className="h-[17px] shrink-0 border-t border-[#d8d8d8] flex items-center justify-end pr-[1px]">
          <span className="w-[43px] h-[12px] border border-[#0a78d7] bg-[#ececec] flex items-center justify-center text-[6.8px] tracking-normal">Close</span>
        </div>
      </div>

      {/* red annotation frames */}
      <div className="absolute left-[62px] top-[43px] w-[36px] h-[16px] border-[2.5px] border-[#e8131d]" />
      <div className="absolute left-[22px] top-[245px] w-[124px] h-[15px] border-[3px] border-[#e8131d]" />
      <div className="absolute left-[26px] top-[533px] w-[129px] h-[25px] border-[3px] border-[#e8131d]" />
    </div>
  );
}
